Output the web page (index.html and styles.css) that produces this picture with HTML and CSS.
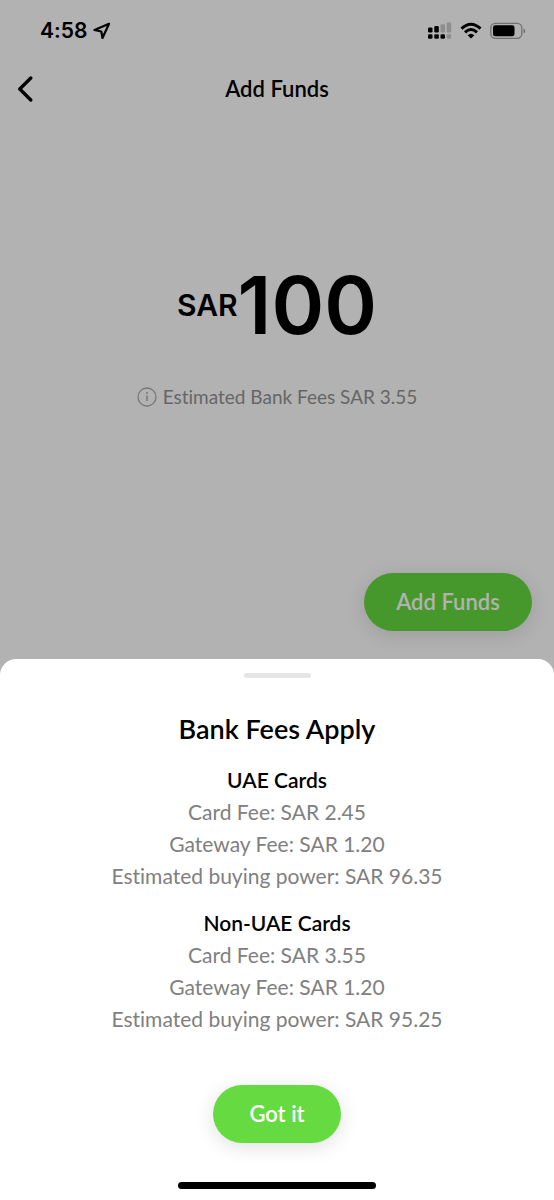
FILE: index.html
```html
<!DOCTYPE html>
<html lang="en">
<head>
<meta charset="utf-8">
<meta name="viewport" content="width=device-width, initial-scale=1">
<title>Add Funds</title>
<link rel="stylesheet" href="styles.css">
</head>
<body>
<div class="screen">
  <div class="status">
    <div class="clock">
      <span>4:58</span>
      <svg width="18" height="18" viewBox="0 0 18 18" aria-hidden="true"><path d="M16 1.800 1.500 8 8.300 9.500 9.500 16Z" fill="none" stroke="#000" stroke-width="2.200" stroke-linejoin="round"/></svg>
    </div>
    <div class="indicators">
      <svg width="24" height="18" viewBox="0 0 24 18" aria-hidden="true">
        <g fill="#000"><rect y="5.500" width="4.500" height="5" rx="1.300"/><rect x="6.300" y="4" width="4.500" height="6.500" rx="1.300"/><rect y="12.300" width="4.500" height="4.500" rx="1.300"/><rect x="6.300" y="12.300" width="4.500" height="4.500" rx="1.300"/><rect x="12.500" y="12.300" width="4.500" height="4.500" rx="1.300"/></g>
        <g fill="#8e8e8e"><rect x="12.500" y="2.300" width="4.500" height="8.200" rx="1.300"/><rect x="18.700" y=".5" width="4.500" height="10" rx="1.300"/><rect x="18.700" y="12.300" width="4.500" height="4.500" rx="1.300"/></g>
      </svg>
      <svg width="22" height="18" viewBox="0 0 22 18" aria-hidden="true">
        <g fill="none" stroke="#000" stroke-width="3"><path d="M1.500 6.600Q11-2.200 20.500 6.600"/><path d="M5 10.300Q11 4.700 17 10.300"/></g>
        <path d="M7.600 13.300Q11 10.300 14.400 13.300L11 16.600Z"/>
      </svg>
      <svg width="36" height="18" viewBox="0 0 36 18" aria-hidden="true">
        <rect x=".8" y="1.300" width="31" height="15" rx="4.500" fill="none" stroke="#707070" stroke-width="1.300"/>
        <rect x="3" y="3.300" width="21.500" height="11" rx="2.300"/>
        <path d="M33.500 6.500Q35.300 7.300 35.300 9T33.500 11.500Z" fill="#707070"/>
      </svg>
    </div>
  </div>
  <header class="nav">
    <button class="back" type="button" aria-label="Back">
      <svg width="16" height="26" viewBox="0 0 16 26" aria-hidden="true"><path d="M13.800 2 2.800 13 13.800 24" fill="none" stroke="#000" stroke-width="3.300" stroke-linecap="round" stroke-linejoin="round"/></svg>
    </button>
    <h1 class="nav-title">Add Funds</h1>
  </header>
  <main class="funds">
    <p class="amount"><span class="currency">SAR</span><span class="value">100</span></p>
    <p class="estimate">
      <svg width="20" height="20" viewBox="0 0 20 20" aria-hidden="true"><circle cx="10" cy="10" r="9" fill="none" stroke="#777" stroke-width="1.300"/><path d="M10 8.500V14" stroke="#777" stroke-width="1.500"/><circle cx="10" cy="6" r="1" fill="#777"/></svg>
      <span>Estimated Bank Fees SAR 3.55</span>
    </p>
    <button class="pill add" type="button">Add Funds</button>
  </main>
  <section class="sheet" role="dialog" aria-labelledby="fees-title">
    <div class="grabber"></div>
    <h2 class="sheet-title" id="fees-title">Bank Fees Apply</h2>
    <div class="group">
      <h3 class="group-title">UAE Cards</h3>
      <p>Card Fee: SAR 2.45</p>
      <p>Gateway Fee: SAR 1.20</p>
      <p>Estimated buying power: SAR 96.35</p>
    </div>
    <div class="group">
      <h3 class="group-title">Non-UAE Cards</h3>
      <p>Card Fee: SAR 3.55</p>
      <p>Gateway Fee: SAR 1.20</p>
      <p>Estimated buying power: SAR 95.25</p>
    </div>
    <button class="pill confirm" type="button">Got it</button>
    <div class="home"></div>
  </section>
</div>
</body>
</html>
```
FILE: styles.css
```css
* { box-sizing: border-box; }
body {
  margin: 0;
  background: #b2b2b2;
  color: #000;
  font-family: Lato, "Open Sans", sans-serif;
  font-size: 21px;
  line-height: 32px;
  font-variant-ligatures: none;
}
h1, h2, h3, p { margin: 0; }
button { border: 0; font: inherit; cursor: pointer; }
svg { display: block; flex: none; }

.screen { min-height: 100vh; display: flex; flex-direction: column; }

.status {
  display: flex;
  justify-content: space-between;
  align-items: center;
  height: 60px;
  padding: 2px 28px 0 40px;
}
.clock {
  display: flex;
  align-items: center;
  gap: 6px;
  font-family: Inter, sans-serif;
  font-size: 21px;
  font-weight: 600;
}
.indicators { display: flex; align-items: center; gap: 8px; }

.nav {
  display: grid;
  grid-template-columns: 48px 1fr 48px;
  align-items: center;
  height: 58px;
}
.back { background: none; padding: 0 0 0 17px; height: 58px; }
.nav-title { font-size: 22px; font-weight: 600; text-align: center; }

.funds {
  flex: 1;
  display: flex;
  flex-direction: column;
  align-items: center;
  padding: 139px 22px 28px;
}
.amount {
  display: flex;
  align-items: center;
  font-family: Inter, sans-serif;
  font-weight: 600;
  line-height: 96px;
}
.currency { font-size: 30px; }
.value { font-size: 80px; }
.estimate {
  display: flex;
  align-items: center;
  gap: 6px;
  margin-top: 28px;
  color: #666;
  font-size: 19px;
}

.pill {
  height: 58px;
  padding: 0 32px;
  border-radius: 29px;
  font-size: 22px;
  font-weight: 600;
}
.add {
  margin-top: auto;
  align-self: flex-end;
  min-width: 168px;
  background: #46982d;
  color: #b2b2b2;
  box-shadow: 0 4px 20px rgba(0, 0, 0, .12);
}
.confirm {
  min-width: 128px;
  margin-top: 35px;
  background: #65db41;
  color: #fff;
  box-shadow: 0 4px 20px rgba(0, 0, 0, .12);
}

.sheet {
  display: flex;
  flex-direction: column;
  align-items: center;
  padding: 14px 16px 11px;
  border-radius: 16px 16px 0 0;
  background: #fff;
  text-align: center;
}
.grabber { width: 67px; height: 5px; border-radius: 3px; background: #e5e5e5; }
.sheet-title { margin: 35px 0 19px; font-size: 27px; font-weight: 600; }
.group { margin-bottom: 15px; color: #808080; }
.group-title { color: #000; font-size: 21px; font-weight: 600; }
.home { width: 198px; height: 7px; margin-top: 39px; border-radius: 4px; background: #000; }
```
